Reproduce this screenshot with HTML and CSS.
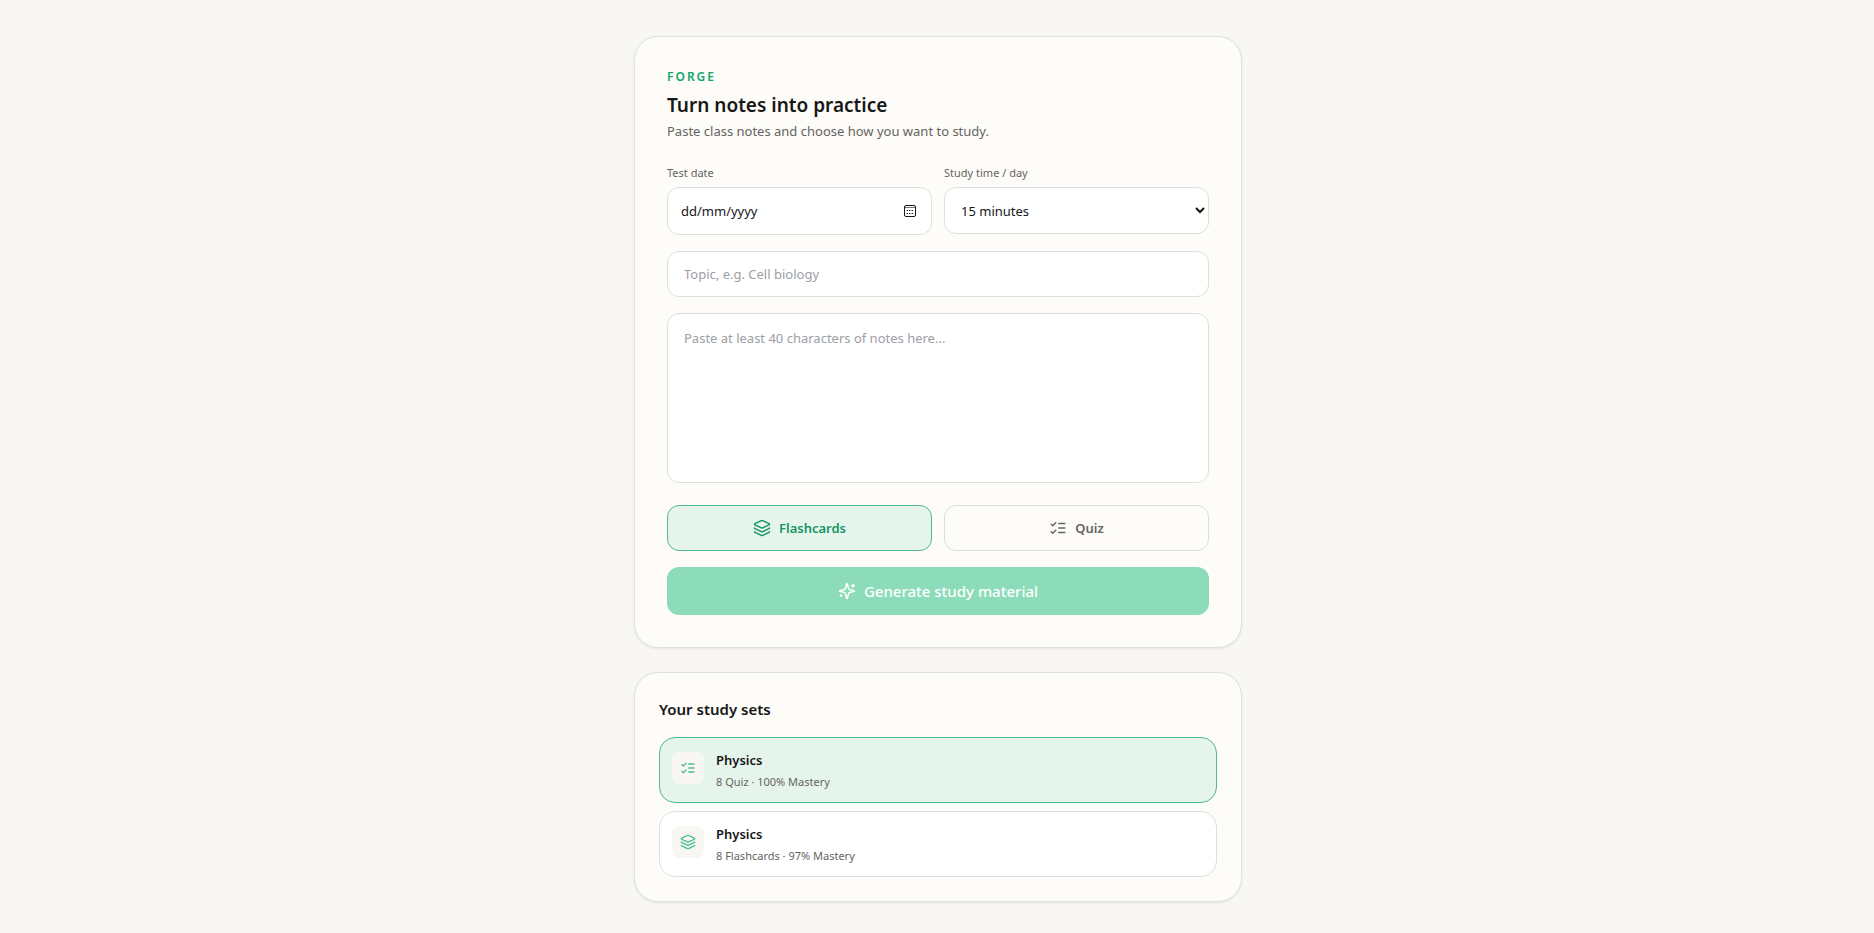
FILE: index.html
```html
<!DOCTYPE html>
<html lang="en-GB">
<head>
<meta charset="utf-8">
<meta name="viewport" content="width=device-width, initial-scale=1">
<title>Forge</title>
<link rel="stylesheet" href="styles.css">
</head>
<body>
<svg class="sprite" aria-hidden="true">
  <symbol id="layers" viewBox="0 0 24 24"><path d="M12.83 2.18a2 2 0 0 0-1.66 0L2.6 6.08a1 1 0 0 0 0 1.83l8.58 3.91a2 2 0 0 0 1.66 0l8.58-3.9a1 1 0 0 0 0-1.83z"/><path d="M2 12a1 1 0 0 0 .58.91l8.6 3.91a2 2 0 0 0 1.65 0l8.58-3.9A1 1 0 0 0 22 12"/><path d="M2 17a1 1 0 0 0 .58.91l8.6 3.91a2 2 0 0 0 1.65 0l8.58-3.9A1 1 0 0 0 22 17"/></symbol>
  <symbol id="checks" viewBox="0 0 24 24"><path d="m3 17 2 2 4-4"/><path d="m3 7 2 2 4-4"/><path d="M13 6h8"/><path d="M13 12h8"/><path d="M13 18h8"/></symbol>
</svg>
<main class="page">
  <form class="card card-form">
    <header class="intro">
      <p class="brand">FORGE</p>
      <h1 class="title">Turn notes into practice</h1>
      <p class="lead">Paste class notes and choose how you want to study.</p>
    </header>
    <div class="pair">
      <div class="field">
        <label class="label" for="date">Test date</label>
        <div class="control date">
          <input class="date-input" id="date" type="text" placeholder="dd/mm/yyyy">
          <button class="date-button" type="button" aria-label="Choose date">
            <svg class="calendar" viewBox="0 0 16 16"><rect x="2.5" y="2.5" width="11" height="11" rx="1.5" fill="none" stroke="currentColor"/><path d="M3 4.5h10" stroke="currentColor" opacity=".6"/><path d="M7 7.5h1.4M9.6 7.5H11M4.6 10.5H6M7 10.5h1.4M9.6 10.5H11M4.6 7.5H6" stroke="currentColor" stroke-width="1.2"/></svg>
          </button>
        </div>
      </div>
      <div class="field">
        <label class="label" for="time">Study time / day</label>
        <select class="control select" id="time"><option>15 minutes</option><option>30 minutes</option></select>
      </div>
    </div>
    <input class="control topic" type="text" placeholder="Topic, e.g. Cell biology" aria-label="Topic">
    <textarea class="control notes" placeholder="Paste at least 40 characters of notes here..." aria-label="Notes"></textarea>
    <div class="pair modes">
      <button class="mode mode-active" type="button"><svg class="icon"><use href="#layers"/></svg>Flashcards</button>
      <button class="mode" type="button"><svg class="icon"><use href="#checks"/></svg>Quiz</button>
    </div>
    <button class="generate" type="button"><svg class="icon" viewBox="0 0 24 24"><path d="M9.937 15.5A2 2 0 0 0 8.5 14.063l-6.135-1.582a.5.5 0 0 1 0-.962L8.5 9.936A2 2 0 0 0 9.937 8.5l1.582-6.135a.5.5 0 0 1 .963 0L14.063 8.5A2 2 0 0 0 15.5 9.937l6.135 1.581a.5.5 0 0 1 0 .964L15.5 14.063a2 2 0 0 0-1.437 1.437l-1.582 6.135a.5.5 0 0 1-.963 0z"/><path d="M20 3v4"/><path d="M22 5h-4"/><path d="M4 17v2"/><path d="M5 18H3"/></svg>Generate study material</button>
  </form>
  <section class="card card-sets">
    <h2 class="sets-title">Your study sets</h2>
    <div class="sets">
      <button class="set set-active" type="button">
        <span class="badge"><svg class="icon"><use href="#checks"/></svg></span>
        <span class="set-text"><span class="set-name">Physics</span><span class="set-meta">8 Quiz · 100% Mastery</span></span>
      </button>
      <button class="set" type="button">
        <span class="badge"><svg class="icon"><use href="#layers"/></svg></span>
        <span class="set-text"><span class="set-name">Physics</span><span class="set-meta">8 Flashcards · 97% Mastery</span></span>
      </button>
    </div>
  </section>
</main>
</body>
</html>
```
FILE: styles.css
```css
* { box-sizing: border-box; }
body {
  margin: 0;
  background: #f8f7f3;
  color: #171717;
  font-family: "Noto Sans", "Open Sans", sans-serif;
  font-size: 13px;
  line-height: 20px;
}
h1, h2, p { margin: 0; }
button, input, select, textarea { font: inherit; color: inherit; }
button { cursor: pointer; }
.sprite { display: none; }
.page {
  max-width: 610px;
  margin: 0 auto;
  padding: 36px 0 30px 2px;
  display: flex;
  flex-direction: column;
  gap: 24px;
}
.card {
  border: 1px solid #e0e0dc;
  border-radius: 24px;
  background: #fdfcf8;
  box-shadow: 0 1px 3px rgba(0, 0, 0, 0.08);
}
.card-form {
  padding: 32px;
  display: flex;
  flex-direction: column;
  gap: 16px;
}
.intro { padding-bottom: 8px; }
.brand {
  color: #10a56c;
  font-size: 12px;
  font-weight: 600;
  line-height: 16px;
  letter-spacing: 2px;
}
.title {
  margin-top: 4px;
  font-size: 19px;
  font-weight: 600;
  line-height: 32px;
}
.lead { color: #666461; }
.pair {
  display: grid;
  grid-template-columns: 1fr 1fr;
  gap: 12px;
  align-items: start;
}
.field { display: flex; flex-direction: column; gap: 6px; }
.label { color: #666461; font-size: 11px; line-height: 16px; }
.control {
  width: 100%;
  border: 1px solid #dedfdd;
  border-radius: 12px;
  background: #fff;
  outline: 0;
}
.date {
  display: flex;
  align-items: center;
  height: 48px;
  padding: 0 13px;
}
.date-input {
  flex: 1;
  min-width: 0;
  padding: 0;
  border: 0;
  outline: 0;
  background: none;
}
.date-input::placeholder { color: #171717; }
.date-button {
  display: flex;
  padding: 0;
  border: 0;
  background: none;
}
.calendar { width: 16px; height: 16px; }
.select { height: 47px; padding: 0 0 0 12px; }
.topic { height: 46px; padding: 0 16px; }
.notes {
  display: block;
  height: 170px;
  padding: 14px 16px;
  resize: none;
}
.topic::placeholder, .notes::placeholder { color: #9c9ea5; }
.modes { padding-top: 6px; }
.mode, .generate {
  display: flex;
  align-items: center;
  justify-content: center;
  gap: 8px;
  border-radius: 12px;
  font-weight: 600;
}
.mode {
  height: 46px;
  border: 1px solid #dedfdd;
  background: none;
  color: #666461;
}
.mode-active {
  border-color: #52b98c;
  background: #e6f5eb;
  color: #159563;
}
.generate {
  height: 48px;
  border: 0;
  background: #8cdcba;
  color: #fff;
  font-size: 15px;
  font-weight: 500;
}
.icon {
  width: 18px;
  height: 18px;
  fill: none;
  stroke: currentColor;
  stroke-width: 2;
  stroke-linecap: round;
  stroke-linejoin: round;
}
.card-sets { padding: 24px; }
.sets-title { font-size: 15px; font-weight: 600; line-height: 24px; }
.sets {
  display: flex;
  flex-direction: column;
  gap: 8px;
  margin-top: 16px;
}
.set {
  display: flex;
  align-items: flex-start;
  gap: 12px;
  padding: 12px;
  border: 1px solid #dedfdd;
  border-radius: 16px;
  background: #fff;
  text-align: left;
}
.set-active { border-color: #52b98c; background: #e6f5eb; }
.badge {
  display: flex;
  align-items: center;
  justify-content: center;
  width: 32px;
  height: 32px;
  margin-top: 2px;
  border-radius: 8px;
  background: #f8f7f3;
  color: #4cbf8e;
}
.badge .icon { width: 16px; height: 16px; }
.set-text { display: flex; flex-direction: column; gap: 4px; }
.set-name { font-weight: 600; line-height: 20px; }
.set-meta { color: #666461; font-size: 11px; line-height: 16px; }
```
